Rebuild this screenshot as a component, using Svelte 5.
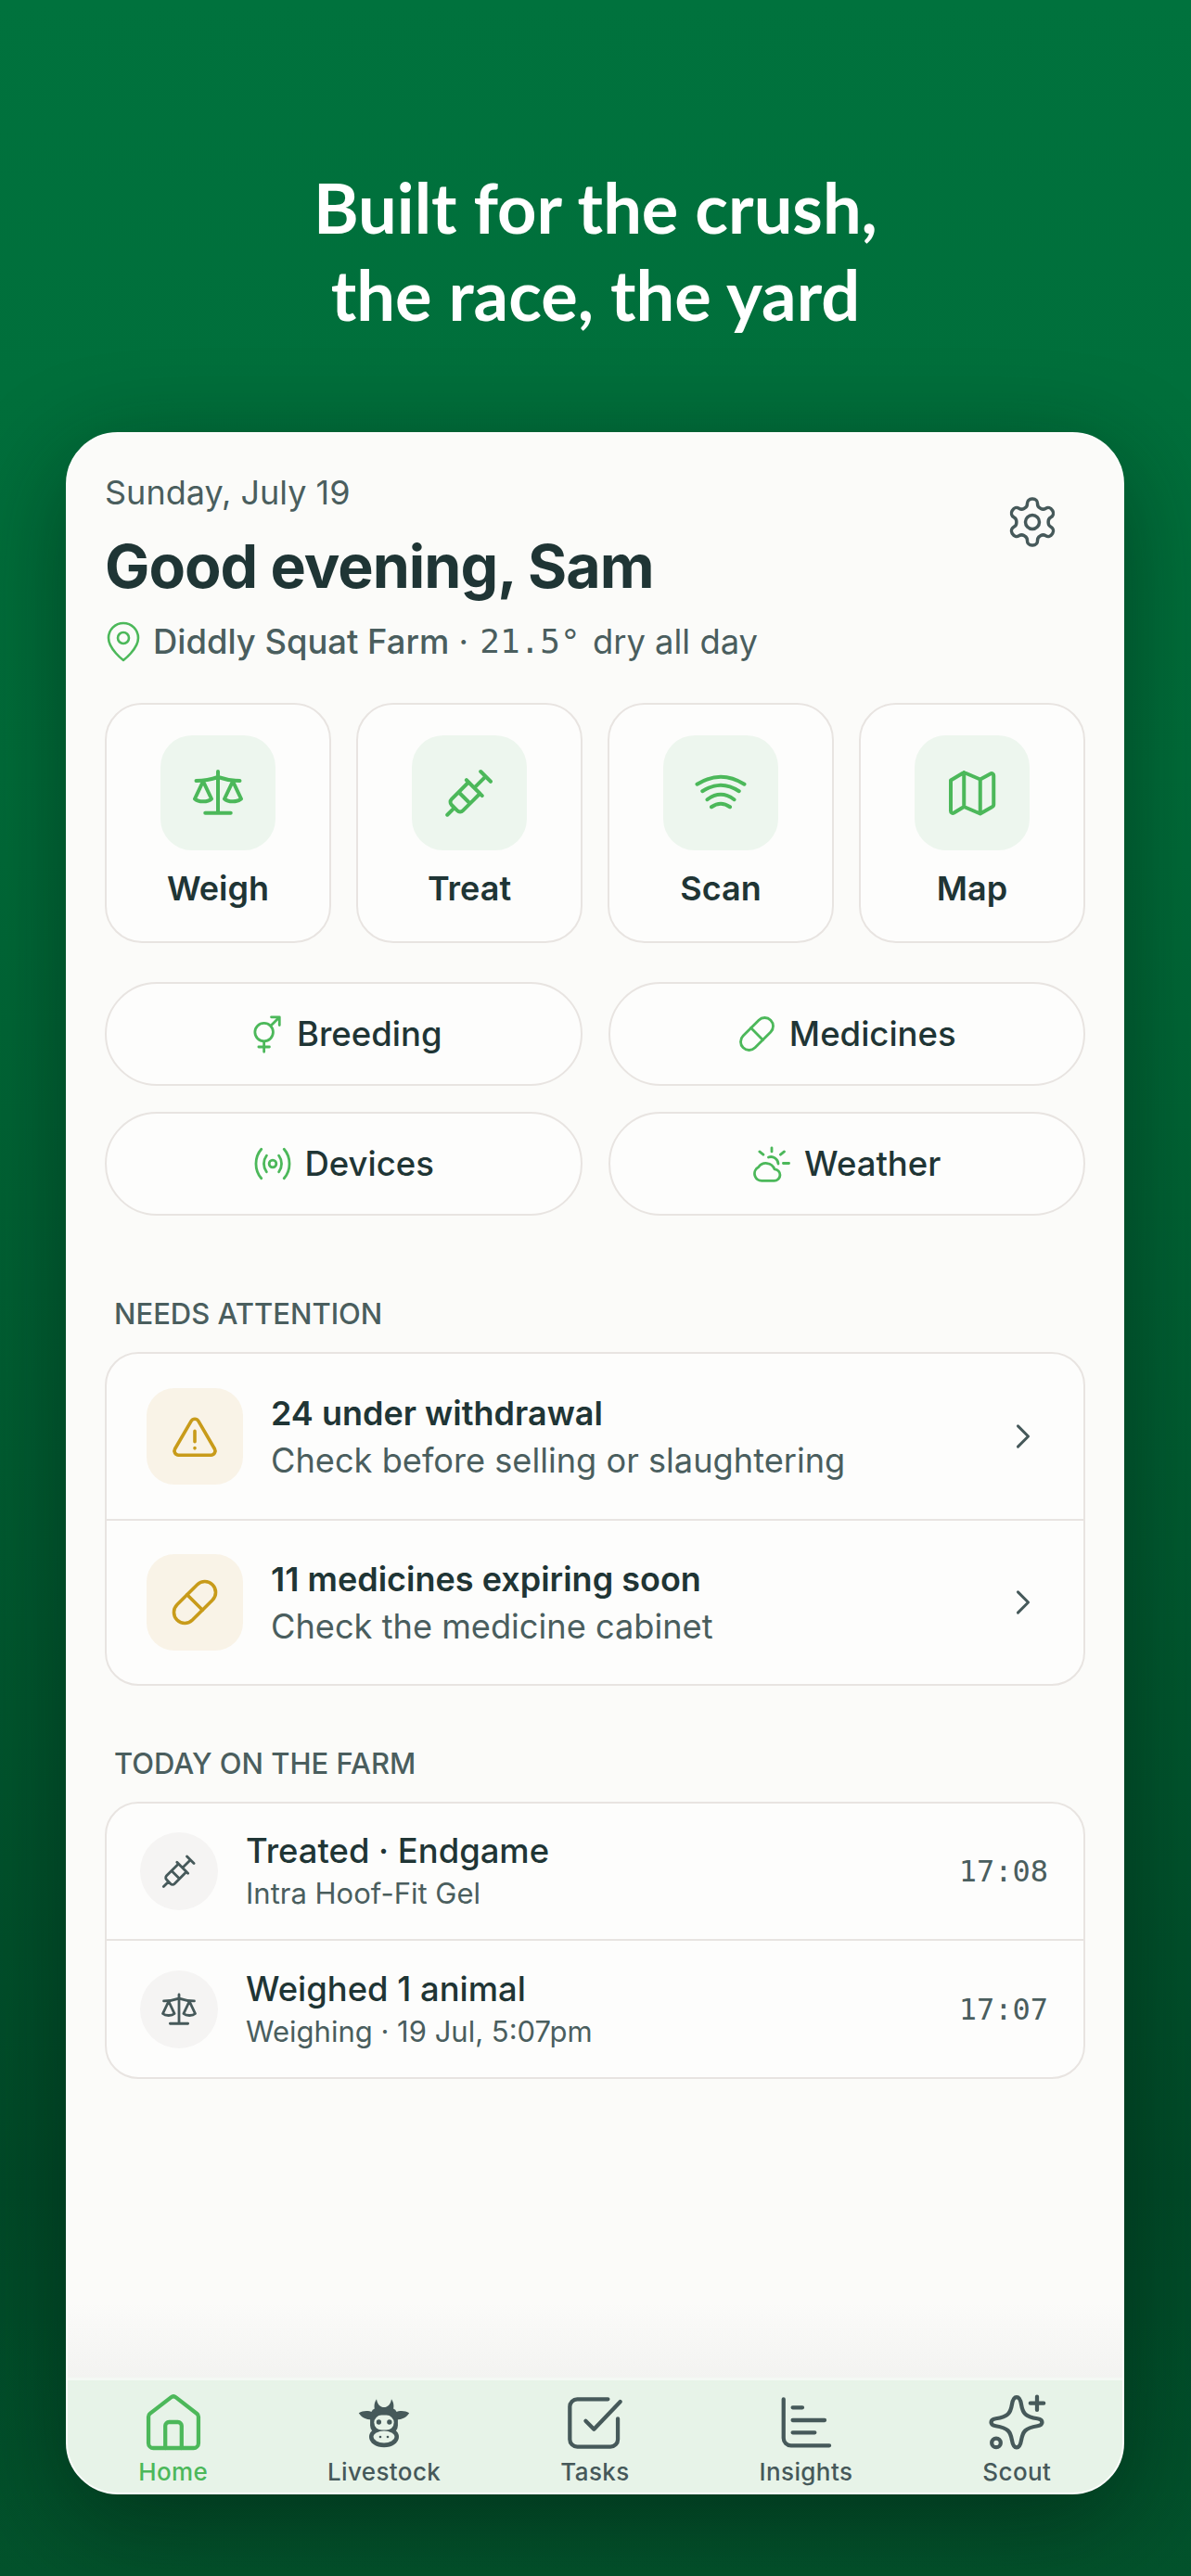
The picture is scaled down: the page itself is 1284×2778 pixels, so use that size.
<script>
  const tiles = [
    { label: "Weigh", icon: "scale" },
    { label: "Treat", icon: "syringe" },
    { label: "Scan", icon: "scan" },
    { label: "Map", icon: "map" }
  ]
  const pills = [
    { label: "Breeding", icon: "breeding" },
    { label: "Medicines", icon: "pill" },
    { label: "Devices", icon: "devices" },
    { label: "Weather", icon: "weather" }
  ]
  const alerts = [
    { title: "24 under withdrawal", sub: "Check before selling or slaughtering", icon: "warning" },
    { title: "11 medicines expiring soon", sub: "Check the medicine cabinet", icon: "pill" }
  ]
  const today = [
    { title: "Treated · Endgame", sub: "Intra Hoof-Fit Gel", time: "17:08", icon: "syringe" },
    { title: "Weighed 1 animal", sub: "Weighing · 19 Jul, 5:07pm", time: "17:07", icon: "scale" }
  ]
  const nav = [
    { label: "Home", icon: "home", active: true },
    { label: "Livestock", icon: "cow" },
    { label: "Tasks", icon: "tasks" },
    { label: "Insights", icon: "insights" },
    { label: "Scout", icon: "scout" }
  ]
</script>

{#snippet glyph(name)}
  {#if name === "scale"}
    <path d="M12 2.8V20.5M6.5 20.7h11M2.6 6.8c3.2 0 6-.4 9.4-1.6 3.4 1.2 6.2 1.6 9.4 1.6" />
    <path d="M5.6 7 2 14.6c1.6 1.5 5.6 1.5 7.2 0zM18.4 7 14.8 14.6c1.6 1.5 5.6 1.5 7.2 0z" />
  {:else if name === "syringe"}
    <g transform="rotate(-45 12 12) translate(1.6 1.6) scale(.866)">
      <path d="M-3.5 12h5M1.5 10a2 2 0 0 1 2-2H15.5v8H3.5a2 2 0 0 1-2-2zM8.5 8v8M15.5 6.5v11M15.5 12h8M23.5 8.5v7" stroke-width="1.85" />
    </g>
  {:else if name === "scan"}
    <path d="M1.8 8.3Q12 1.9 22.2 8.3M4.1 11.3Q12 6.1 19.9 11.3M6.2 14.9Q12 10.5 17.8 14.9M8 18.1Q12 15.3 16 18.1" />
  {:else if name === "map"}
    <path d="M2.8 6.6 8.5 3.2l7 3 4.4-2.4c.7-.4 1.4.1 1.4.8v12.4c0 .5-.2.9-.7 1.1L15.5 21l-7-3-4.3 2.6c-.7.4-1.4 0-1.4-.8zM8.5 3.2V18M15.5 6.2V21" />
  {:else if name === "breeding"}
    <g transform="translate(1.5 0)">
      <circle cx="10.3" cy="10.9" r="5.6" />
      <path d="M14.4 7 19.6 1.8M14.8 1.6h5v5M10.3 16.6V23M7 20h6.6" />
    </g>
  {:else if name === "pill"}
    <g transform="rotate(-45 12 12)">
      <rect x="0" y="6.8" width="24" height="10.4" rx="5.2" />
      <path d="M12 6.8v10.4" />
    </g>
  {:else if name === "devices"}
    <circle cx="12" cy="12" r="2.2" />
    <path d="M8.2 7C6 10 6 14 8.2 17M15.8 7c2.2 3 2.2 7 0 10M5 3C.6 8 .6 16 5 21M19 3c4.4 5 4.4 13 0 18" />
  {:else if name === "weather"}
    <path d="M6 22.5h7.3a3.6 3.6 0 0 0 .4-7.2A5.6 5.6 0 0 0 3.8 14.2 4.4 4.4 0 0 0 6 22.5zM10 8a4.5 4.5 0 0 1 6 4M12 2.2v2.3M4.5 4.5l2.3 1.9M19.7 4.5l-2.3 1.9M19.1 11.7h3.5" />
  {:else if name === "warning"}
    <path d="M10.3 4.6 2.5 18a2 2 0 0 0 1.7 3h15.6a2 2 0 0 0 1.7-3L13.7 4.6a2 2 0 0 0-3.4 0zM12 9.5v5M12 17.6v.1" />
  {:else if name === "home"}
    <path d="M3.9 22.5h16.2a2 2 0 0 0 2-2V9.8a1.5 1.5 0 0 0-.6-1.2L13 2a1.6 1.6 0 0 0-2 0L2.5 8.6a1.5 1.5 0 0 0-.6 1.2v10.7a2 2 0 0 0 2 2z" />
    <path d="M8.7 22.5v-9a1.5 1.5 0 0 1 1.5-1.5h3.6a1.5 1.5 0 0 1 1.5 1.5v9" />
  {:else if name === "cow"}
    <g class="solid">
      <path d="M1.8 8.3C3.5 7.2 6 7.3 7.2 8v3C4.5 11 2.8 10 1.8 8.3zM22.2 8.3C20.5 7.2 18 7.3 16.8 8v3c2.7 0 4.4-1 5.4-2.7z" />
      <path d="M8.5 7.5C7.8 6 8 4 9 2.7c.3 1.8 1 2.8 2.5 3.3zM15.5 7.5C16.2 6 16 4 15 2.7c-.3 1.8-1 2.8-2.5 3.3z" />
      <rect x="6.4" y="6" width="11.2" height="11" rx="3.6" />
      <ellipse cx="12" cy="18" rx="6" ry="4.2" />
      <rect class="light" x="8" y="9.2" width="8" height="6" rx="3" />
      <ellipse class="light" cx="12" cy="18" rx="4.3" ry="2.4" />
      <circle cx="9.9" cy="12" r="1" />
      <circle cx="14.2" cy="12" r="1" />
      <circle cx="10.5" cy="18" r=".5" />
      <circle cx="13.5" cy="18" r=".5" />
    </g>
  {:else if name === "tasks"}
    <path d="M17.4 2.75H5a3 3 0 0 0-3 3V19a3 3 0 0 0 3 3h13.4a3 3 0 0 0 3-3v-8.4M8.4 11.5l3.35 3.4L22.4 3.75" />
  {:else if name === "insights"}
    <path d="M2.9 2.75V18.5a3 3 0 0 0 3 3h15.5M6.6 6.1h3.9M6.6 11.25h12.9M6.6 16.25h8.9" />
  {:else if name === "scout"}
    <path d="M12 1.9c1.2 0 1.6 1.2 1.9 3 .6 3.6 1.6 4.9 6.5 5.7 1.2.2 1.9.7 1.9 1.5s-.7 1.3-1.9 1.5c-4.9.8-5.9 2.1-6.5 5.7-.3 1.8-.7 3-1.9 3s-1.6-1.2-1.9-3c-.6-3.6-1.6-4.9-6.5-5.7-1.2-.2-1.9-.7-1.9-1.5s.7-1.3 1.9-1.5c4.9-.8 5.9-2.1 6.5-5.7.3-1.8.7-3 1.9-3z" />
    <path d="M20.25 1.7v5.4M17.55 4.4h5.4" />
    <circle cx="3.75" cy="20.4" r="1.8" />
  {/if}
{/snippet}

{#snippet icon(name, size)}
  <svg width={size} height={size} viewBox="0 0 24 24" fill="none" stroke="currentColor" stroke-width="1.6" stroke-linecap="round" stroke-linejoin="round">
    {@render glyph(name)}
  </svg>
{/snippet}

<div class="page">
  <h1>Built for the crush,<br />the race, the yard</h1>

  <main class="phone">
    <div class="content">
      <header>
        <div>
          <p class="date">Sunday, July 19</p>
          <h2>Good evening, Sam</h2>
          <p class="place">
            <span class="pin">
              <svg width="48" height="48" viewBox="0 0 24 24" fill="none" stroke="currentColor" stroke-width="1.3" stroke-linecap="round" stroke-linejoin="round">
                <path d="M20 10c0 6-8 12-8 12s-8-6-8-12a8 8 0 0 1 16 0Z" />
                <circle cx="12" cy="10" r="3" />
              </svg>
            </span>
            <span class="farm">Diddly Squat Farm</span> · <span class="mono">21.5°</span> dry all day
          </p>
        </div>
        <span class="gear">
          <svg width="60" height="60" viewBox="0 0 24 24" fill="none" stroke="currentColor" stroke-width="1.4" stroke-linecap="round" stroke-linejoin="round">
            <path d="M12.22 2h-.44a2 2 0 0 0-2 2v.18a2 2 0 0 1-1 1.73l-.43.25a2 2 0 0 1-2 0l-.15-.08a2 2 0 0 0-2.73.73l-.22.38a2 2 0 0 0 .73 2.73l.15.1a2 2 0 0 1 1 1.72v.51a2 2 0 0 1-1 1.74l-.15.09a2 2 0 0 0-.73 2.73l.22.38a2 2 0 0 0 2.73.73l.15-.08a2 2 0 0 1 2 0l.43.25a2 2 0 0 1 1 1.73V20a2 2 0 0 0 2 2h.44a2 2 0 0 0 2-2v-.18a2 2 0 0 1 1-1.73l.43-.25a2 2 0 0 1 2 0l.15.08a2 2 0 0 0 2.73-.73l.22-.39a2 2 0 0 0-.73-2.73l-.15-.08a2 2 0 0 1-1-1.74v-.5a2 2 0 0 1 1-1.74l.15-.09a2 2 0 0 0 .73-2.73l-.22-.38a2 2 0 0 0-2.73-.73l-.15.08a2 2 0 0 1-2 0l-.43-.25a2 2 0 0 1-1-1.73V4a2 2 0 0 0-2-2z" />
            <circle cx="12" cy="12" r="3" />
          </svg>
        </span>
      </header>

      <section class="tiles">
        {#each tiles as t}
          <div class="tile">
            <span class="tile-icon">{@render icon(t.icon, 60)}</span>
            <span class="tile-label">{t.label}</span>
          </div>
        {/each}
      </section>

      <section class="pills">
        {#each pills as p}
          <div class="pill">
            <span class="pill-icon">{@render icon(p.icon, 42)}</span>
            {p.label}
          </div>
        {/each}
      </section>

      <h3 class="attention">NEEDS ATTENTION</h3>
      <div class="list">
        {#each alerts as a}
          <div class="alert">
            <span class="alert-icon">{@render icon(a.icon, 54)}</span>
            <div class="alert-text">
              <strong>{a.title}</strong>
              <span>{a.sub}</span>
            </div>
            <svg class="chev" width="38" height="38" viewBox="0 0 24 24" fill="none" stroke="currentColor" stroke-width="1.9" stroke-linecap="round" stroke-linejoin="round">
              <path d="M8.5 5l7 7-7 7" />
            </svg>
          </div>
        {/each}
      </div>

      <h3 class="today">TODAY ON THE FARM</h3>
      <div class="list">
        {#each today as t}
          <div class="event">
            <span class="event-icon">{@render icon(t.icon, 42)}</span>
            <div class="event-text">
              <strong>{t.title}</strong>
              <span>{t.sub}</span>
            </div>
            <time>{t.time}</time>
          </div>
        {/each}
      </div>
    </div>

    <nav>
      {#each nav as n}
        <div class="nav-item" class:active={n.active}>
          {@render icon(n.icon, 64)}
          <span>{n.label}</span>
        </div>
      {/each}
    </nav>
  </main>
</div>

<style>
  :global(body) {
    margin: 0;
  }

  .page {
    width: 1284px;
    height: 2778px;
    overflow: hidden;
    box-sizing: border-box;
    padding-top: 177px;
    background: linear-gradient(180deg, #00723d 0%, #006c39 30%, #005a30 60%, #004a28 85%, #03532c 100%);
    font-family: Inter, "Noto Sans", sans-serif;
    color: #1f3535;
  }

  h1 {
    margin: 0;
    text-align: center;
    font-family: Lato, sans-serif;
    font-weight: 700;
    font-size: 74px;
    line-height: 94px;
    color: #fff;
  }

  .phone {
    box-sizing: border-box;
    width: 1141px;
    height: 2224px;
    margin: 101px 71px 0;
    display: flex;
    flex-direction: column;
    justify-content: space-between;
    background: #fbfbf9;
    border: 2px solid #fdfdfc;
    border-radius: 56px;
    overflow: hidden;
    box-shadow: 0 30px 110px rgba(0, 20, 10, 0.45);
  }

  .content {
    padding: 43px 40px 0;
  }

  header {
    display: flex;
    justify-content: space-between;
    align-items: flex-start;
  }

  .date {
    margin: 0;
    font-size: 36px;
    line-height: 40px;
    color: #4a5e5e;
  }

  h2 {
    margin: 20px 0 0;
    font-size: 64.5px;
    line-height: 80px;
    font-weight: 700;
    letter-spacing: -1px;
    color: #1f3535;
  }

  .place {
    margin: 17px 0 0;
    display: flex;
    align-items: center;
    font-size: 36.4px;
    line-height: 44px;
    color: #4a5e5e;
    white-space: pre;
  }

  .pin {
    display: flex;
    color: #4cb85a;
    margin: 0 8px 0 -4px;
  }

  .farm {
    font-weight: 500;
  }

  .mono {
    margin: 0 3px 0 2px;
    font-family: "DejaVu Sans Mono", monospace;
    font-size: 36px;
  }

  .gear {
    display: flex;
    margin: 22px 27px 0 0;
    color: #46595a;
  }

  .tiles {
    display: grid;
    grid-template-columns: repeat(4, 1fr);
    gap: 27px;
    margin-top: 42px;
  }

  .tile {
    box-sizing: border-box;
    height: 259px;
    display: flex;
    flex-direction: column;
    align-items: center;
    padding-top: 33px;
    background: #fdfdfc;
    border: 2px solid #e8e4e1;
    border-radius: 40px;
  }

  .tile-icon {
    width: 124px;
    height: 124px;
    display: flex;
    align-items: center;
    justify-content: center;
    border-radius: 34px;
    background: #edf6ee;
    color: #4cb85a;
  }

  .tile-label {
    margin-top: 19px;
    font-size: 36px;
    line-height: 44px;
    font-weight: 600;
  }

  .pills {
    display: grid;
    grid-template-columns: 1fr 1fr;
    gap: 28px;
    margin-top: 42px;
  }

  .pill {
    box-sizing: border-box;
    height: 112px;
    display: flex;
    align-items: center;
    justify-content: center;
    gap: 14px;
    background: #fdfdfc;
    border: 2px solid #e8e4e1;
    border-radius: 56px;
    font-size: 36.5px;
    font-weight: 500;
  }

  .pill-icon {
    display: flex;
    color: #4cb85a;
  }

  h3 {
    margin: 0;
    padding-left: 10px;
    font-size: 31px;
    line-height: 40px;
    font-weight: 500;
    color: #4a5e5e;
  }

  .attention {
    margin-top: 86px;
  }

  .today {
    margin-top: 64px;
  }

  .list {
    margin-top: 21px;
    background: #fdfdfc;
    border: 2px solid #e8e4e1;
    border-radius: 36px;
    overflow: hidden;
  }

  .alert {
    box-sizing: border-box;
    height: 178px;
    display: flex;
    align-items: center;
    padding: 0 46px 0 43px;
  }

  .alert + .alert {
    border-top: 2px solid #e8e4e1;
  }

  .alert-icon {
    width: 104px;
    height: 104px;
    flex: none;
    display: flex;
    align-items: center;
    justify-content: center;
    border-radius: 30px;
    background: #f9f3e7;
    color: #c89b1a;
  }

  .alert-text {
    flex: 1;
    display: flex;
    flex-direction: column;
    gap: 7px;
    margin-left: 30px;
    font-size: 36.2px;
    line-height: 44px;
    color: #4a5e5e;
  }

  .alert-text strong {
    font-size: 36px;
    font-weight: 600;
    color: #1f3535;
  }

  .chev {
    color: #46595a;
  }

  .event {
    box-sizing: border-box;
    height: 146px;
    display: flex;
    align-items: center;
    padding: 0 38px 0 36px;
  }

  .event + .event {
    border-top: 2px solid #e8e4e1;
    height: 149px;
  }

  .event-icon {
    width: 84px;
    height: 84px;
    flex: none;
    display: flex;
    align-items: center;
    justify-content: center;
    border-radius: 50%;
    background: #f5f4f3;
    color: #46595a;
  }

  .event-text {
    flex: 1;
    display: flex;
    flex-direction: column;
    gap: 4px;
    margin-left: 30px;
    font-size: 31px;
    line-height: 40px;
    color: #4a5e5e;
  }

  .event-text strong {
    font-size: 36.4px;
    line-height: 44px;
    font-weight: 500;
    color: #1f3535;
  }

  time {
    font-family: "DejaVu Sans Mono", monospace;
    font-size: 32px;
    color: #4a5e5e;
  }

  nav {
    position: relative;
    display: grid;
    grid-template-columns: repeat(5, 1fr);
    height: 124px;
    box-sizing: border-box;
    padding-top: 13px;
    background: #e7f3e8;
    border-top: 3px solid #f4f9f4;
  }

  nav::before {
    content: "";
    position: absolute;
    left: 0;
    right: 0;
    top: -83px;
    height: 80px;
    background: linear-gradient(180deg, rgba(243, 243, 241, 0), #f3f3f1);
  }

  .nav-item {
    display: flex;
    flex-direction: column;
    align-items: center;
    color: #46595a;
    font-size: 26px;
    font-weight: 500;
    line-height: 30px;
    letter-spacing: 0.4px;
  }

  .nav-item.active {
    color: #4cb85a;
  }

  .nav-item span {
    margin-top: 7px;
  }

  .solid {
    fill: currentColor;
    stroke: none;
  }

  .light {
    fill: #e7f3e8;
  }
</style>
